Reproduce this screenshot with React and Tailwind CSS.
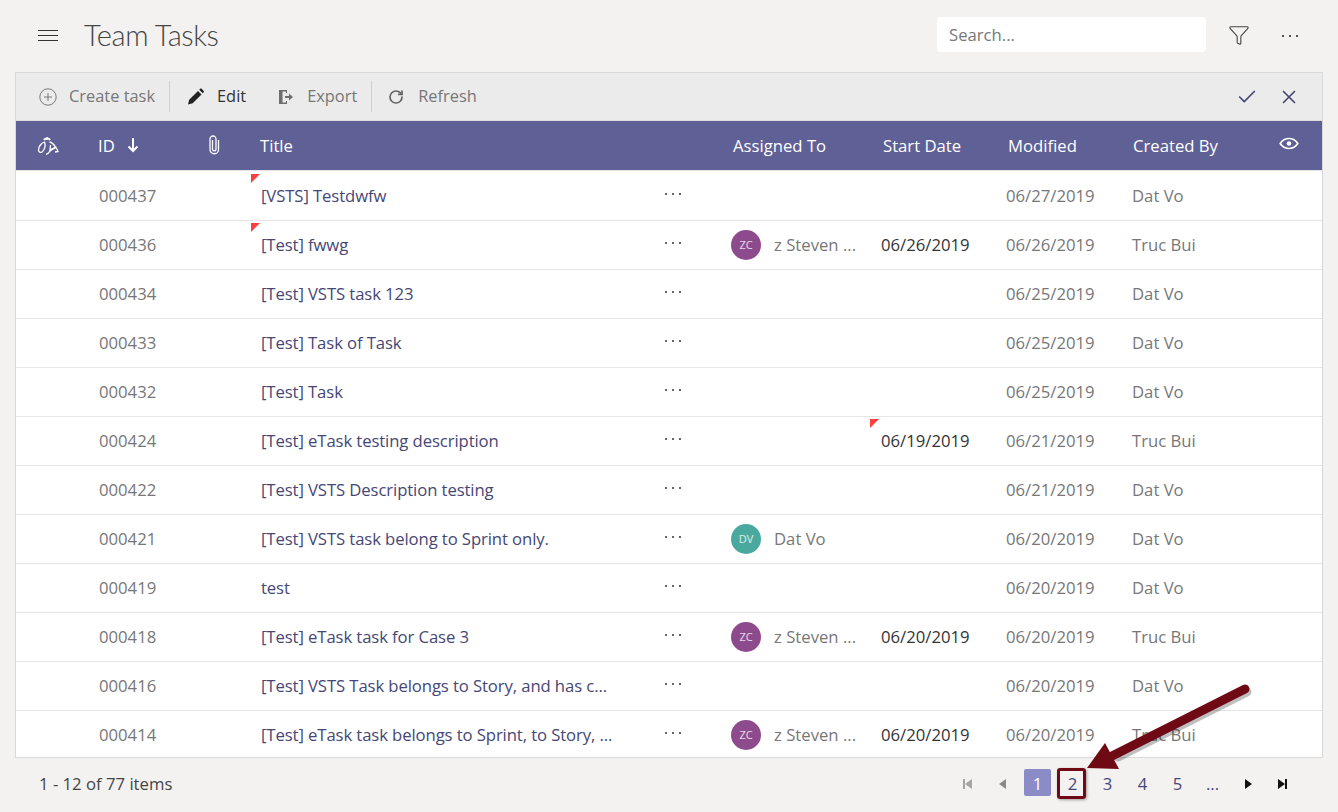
import { Filter, RotateCw, Check, X } from 'lucide-react';

const rows = [
  { id: '000437', title: '[VSTS] Testdwfw', flag: true, modified: '06/27/2019', by: 'Dat Vo' },
  { id: '000436', title: '[Test] fwwg', flag: true, who: 'zc', start: '06/26/2019', modified: '06/26/2019', by: 'Truc Bui' },
  { id: '000434', title: '[Test] VSTS task 123', modified: '06/25/2019', by: 'Dat Vo' },
  { id: '000433', title: '[Test] Task of Task', modified: '06/25/2019', by: 'Dat Vo' },
  { id: '000432', title: '[Test] Task', modified: '06/25/2019', by: 'Dat Vo' },
  { id: '000424', title: '[Test] eTask testing description', start: '06/19/2019', startFlag: true, modified: '06/21/2019', by: 'Truc Bui' },
  { id: '000422', title: '[Test] VSTS Description testing', modified: '06/21/2019', by: 'Dat Vo' },
  { id: '000421', title: '[Test] VSTS task belong to Sprint only.', who: 'dv', modified: '06/20/2019', by: 'Dat Vo' },
  { id: '000419', title: 'test', modified: '06/20/2019', by: 'Dat Vo' },
  { id: '000418', title: '[Test] eTask task for Case 3', who: 'zc', start: '06/20/2019', modified: '06/20/2019', by: 'Truc Bui' },
  { id: '000416', title: '[Test] VSTS Task belongs to Story, and has c...', modified: '06/20/2019', by: 'Dat Vo' },
  { id: '000414', title: '[Test] eTask task belongs to Sprint, to Story, ...', who: 'zc', start: '06/20/2019', modified: '06/20/2019', by: 'Truc Bui' },
];

const people = {
  zc: { initials: 'ZC', name: 'z Steven ...', bg: 'bg-[#8d4a8d]' },
  dv: { initials: 'DV', name: 'Dat Vo', bg: 'bg-[#4aa99e]' },
};

const gridCols = 'grid grid-cols-[83px_162px_470px_150px_125px_126px_1fr] items-center';

function Dots({ className }) {
  return (
    <span className={`flex gap-[5px] ${className}`}>
      <i className="block w-[2px] h-[2px] bg-current" />
      <i className="block w-[2px] h-[2px] bg-current" />
      <i className="block w-[2px] h-[2px] bg-current" />
    </span>
  );
}

function Flag() {
  return <span className="absolute w-[9px] h-[9px] bg-[#f9403f] [clip-path:polygon(0_0,100%_0,0_100%)]" />;
}

function BugIcon() {
  return (
    <svg width="22" height="20" viewBox="0 0 22 20" fill="none" stroke="white" strokeWidth="1.3">
      <path d="M7 4c1-2 5-2 6 0" strokeWidth="2" />
      <path d="M10 1v3" />
      <path d="M7.500 6C4 7 1.500 11 1.500 14c0 2 2 3 3.500 2 2.500-2 4-6.500 2.500-10z" />
      <path d="M12.500 6c2.500.5 4.500 2.500 6 5l-5.500 3 .5-5" />
      <path d="M9 18.500c2-.5 3-2 4.500-4l5.500-3 2 4-3 .5" />
    </svg>
  );
}

function ExportIcon() {
  return (
    <svg width="16" height="16" viewBox="0 0 16 16" fill="#6e6e6e">
      <path d="M1 1h8v3H8V2.500H4.500v11H8V12h1v3H1z" />
      <path d="M7 7h4V4.500L15 8l-4 3.500V9H7z" />
    </svg>
  );
}

function PencilIcon() {
  return (
    <svg width="18" height="17" viewBox="0 0 18 17" fill="#222" className="ml-[17px]">
      <path d="M1 16.500l1.200-4.700L11 3l3.500 3.500-8.800 8.800z" />
      <path d="M12.200 1.800l1-1c.4-.4 1-.4 1.400 0l2.100 2.100c.4.400.4 1 0 1.400l-1 1z" />
    </svg>
  );
}

function PlusCircle() {
  return (
    <svg width="18" height="18" viewBox="0 0 18 18" fill="none" stroke="#7a7a7a" strokeWidth="1">
      <circle cx="9" cy="9" r="8.200" />
      <path d="M9 5v8M5 9h8" />
    </svg>
  );
}

function ClipIcon() {
  return (
    <svg width="12" height="20" viewBox="0 0 12 20" fill="none" stroke="white" strokeWidth="1.300" className="absolute left-[110px]">
      <path d="M4.500 5v9.500a1.800 1.800 0 0 0 3.500 0V4a3 3 0 0 0-6 0v10.500a4.200 4.200 0 0 0 8.500 0V5" />
    </svg>
  );
}

function EyeIcon() {
  return (
    <svg width="20" height="13" viewBox="0 0 20 13" fill="none" stroke="white" strokeWidth="1.700" className="ml-[61px] mt-[-4px]">
      <path d="M1.200 6.500C3.500 3 6.500 1.500 10 1.500s6.500 1.500 8.800 5c-2.300 3.500-5.300 5-8.800 5s-6.500-1.500-8.800-5z" />
      <circle cx="10" cy="6.500" r="2.300" fill="white" stroke="none" />
    </svg>
  );
}

function DownArrow() {
  return (
    <svg width="12" height="15" viewBox="0 0 12 15" fill="none" stroke="white" strokeWidth="2" className="ml-[12px]">
      <path d="M6 0v13M1.500 8.500L6 13l4.500-4.500" />
    </svg>
  );
}

function Triangle({ dir, color }) {
  return (
    <svg width="10" height="10" viewBox="0 0 10 10" fill={color}>
      {dir === 'left' ? <path d="M8 0v10L1 5z" /> : <path d="M2 0v10l7-5z" />}
    </svg>
  );
}

function PagerEdge({ dir, color }) {
  return (
    <svg width="11" height="10" viewBox="0 0 11 10" fill={color}>
      {dir === 'left' ? <path d="M1 0h2v10H1zM10 0v10L3 5z" /> : <path d="M1 0v10l7-5zM8 0h2v10H8z" />}
    </svg>
  );
}

function Row({ row }) {
  const person = row.who && people[row.who];
  return (
    <div className={`${gridCols} h-[49px] shrink-0 border-b border-[#e6e6e6] bg-white`}>
      <span />
      <span className="text-[#777]">{row.id}</span>
      <div className="relative h-full flex items-center">
        {row.flag && <span className="absolute left-[-10px] top-[2px]"><Flag /></span>}
        <span className="w-[352px] whitespace-nowrap text-[#464775] tracking-[-0.1px]">{row.title}</span>
        <Dots className="ml-[52px] text-[#666] mt-[-4px]" />
      </div>
      <div className="flex items-center">
        {person && (
          <>
            <span className={`w-[30px] h-[30px] rounded-full ${person.bg} text-white/80 text-[11px] flex items-center justify-center`}>{person.initials}</span>
            <span className="ml-[13px] text-[#777] whitespace-nowrap">{person.name}</span>
          </>
        )}
      </div>
      <div className="relative h-full flex items-center text-[#333]">
        {row.startFlag && <span className="absolute left-[-11px] top-[2px]"><Flag /></span>}
        {row.start}
      </div>
      <span className="text-[#777]">{row.modified}</span>
      <span className="text-[#777]">{row.by}</span>
    </div>
  );
}

export default function App() {
  return (
    <div className="relative w-[1338px] h-[812px] overflow-hidden bg-[#f3f2f1] text-[16.7px] font-['Open_Sans','Noto_Sans',sans-serif]">
      {/* top bar */}
      <div className="h-[72px] flex items-center pl-[38px] pr-[40px]">
        <div className="w-[20px] flex flex-col gap-[3.5px] mt-[-1px]">
          <i className="block h-[1.5px] bg-[#333]" />
          <i className="block h-[1.5px] bg-[#333]" />
          <i className="block h-[1.5px] bg-[#333]" />
        </div>
        <h1 className="ml-[26px] text-[29px] font-light text-[#444] mt-[-3px] tracking-[-0.4px] font-['Lato',sans-serif]">Team Tasks</h1>
        <div className="ml-auto w-[269px] h-[35px] mt-[-4px] bg-white rounded-[4px] pl-[12px] pt-[2px] flex items-center text-[#777]">Search...</div>
        <Filter size={22} strokeWidth={1.2} className="ml-[22px] text-[#444] mt-[-2px]" />
        <Dots className="ml-[32px] text-[#555] mt-[-1px]" />
      </div>

      {/* grid panel */}
      <div className="mx-[15px] h-[686px] border border-[#d9d9d9] flex flex-col overflow-hidden">
        <div className="h-[48px] shrink-0 bg-[#ebebeb] border-b border-[#dcdcdc] flex items-center text-[#777] text-[16.4px] pl-[23px] pr-[22px]">
          <PlusCircle />
          <span className="ml-[12px] w-[87px] whitespace-nowrap">Create task</span>
          <i className="block ml-[13px] w-px h-[31px] bg-[#cfcfcf]" />
          <PencilIcon />
          <span className="ml-[12px] text-[#333]">Edit</span>
          <span className="ml-[32px]"><ExportIcon /></span>
          <span className="ml-[13px]">Export</span>
          <i className="block ml-[14px] w-px h-[31px] bg-[#cfcfcf]" />
          <RotateCw size={16} strokeWidth={2.6} className="ml-[16px] text-[#666]" />
          <span className="ml-[14px]">Refresh</span>
          <Check size={22} strokeWidth={1.8} className="ml-auto text-[#464775]" />
          <X size={22} strokeWidth={1.8} className="ml-[20px] text-[#464775]" />
        </div>

        <div className={`${gridCols} h-[50px] shrink-0 bg-[#5f6095] text-white border-b border-[#e6e6e6]`}>
          <span className="pl-[21px] flex"><BugIcon /></span>
          <div className="relative flex items-center ml-[-1px]">
            <span>ID</span>
            <DownArrow />
            <ClipIcon />
          </div>
          <span className="ml-[-1px]">Title</span>
          <span className="ml-[2px]">Assigned To</span>
          <span className="ml-[2px]">Start Date</span>
          <span className="ml-[2px]">Modified</span>
          <div className="flex items-center">
            <span className="ml-[1px]">Created By</span>
            <EyeIcon />
          </div>
        </div>

        <div className="flex-1 flex flex-col overflow-hidden bg-white pt-[1px]">
          {rows.map((row) => <Row key={row.id} row={row} />)}
        </div>
      </div>

      {/* footer */}
      <div className="h-[54px] flex items-center pl-[39px] text-[#444]">
        <span className="pb-[2px]">1 - 12 of 77 items</span>
        <div className="ml-auto mr-[38px] flex items-center text-[#464775] pb-[2px]">
          <span className="w-[35px] flex justify-center"><PagerEdge dir="left" color="#a5a5a5" /></span>
          <span className="w-[35px] flex justify-center"><Triangle dir="left" color="#8a8a8a" /></span>
          <span className="w-[35px] flex justify-center">
            <span className="w-[27px] h-[27px] mb-[3px] pt-[3px] rounded-[2px] bg-[#8b8cc7] text-white flex items-center justify-center">1</span>
          </span>
          <span className="w-[35px] flex justify-center">2</span>
          <span className="w-[35px] flex justify-center">3</span>
          <span className="w-[35px] flex justify-center">4</span>
          <span className="w-[35px] flex justify-center">5</span>
          <span className="w-[35px] flex justify-center">...</span>
          <span className="w-[35px] flex justify-center"><Triangle dir="right" color="#111" /></span>
          <span className="w-[35px] flex justify-center"><PagerEdge dir="right" color="#111" /></span>
        </div>
      </div>

      {/* annotation over the pager */}
      <div className="absolute left-[1057px] top-[768px] w-[29px] h-[31px] rounded-[3px] border-[3px] border-[#6f0a14] shadow-[1px_1px_3px_rgba(0,0,0,0.35)]" />
      <svg className="absolute left-[1070px] top-[670px] pointer-events-none" width="200" height="110" viewBox="0 0 200 110" fill="none">
        <path d="M175 19 L46 84" stroke="#000" strokeOpacity="0.25" strokeWidth="9" strokeLinecap="round" transform="translate(2 3)" />
        <path d="M175 19 L42 86" stroke="#6f0a14" strokeWidth="9" strokeLinecap="round" />
        <path d="M17 98 L35 73 L49 99 Z" fill="#6f0a14" />
      </svg>
    </div>
  );
}
